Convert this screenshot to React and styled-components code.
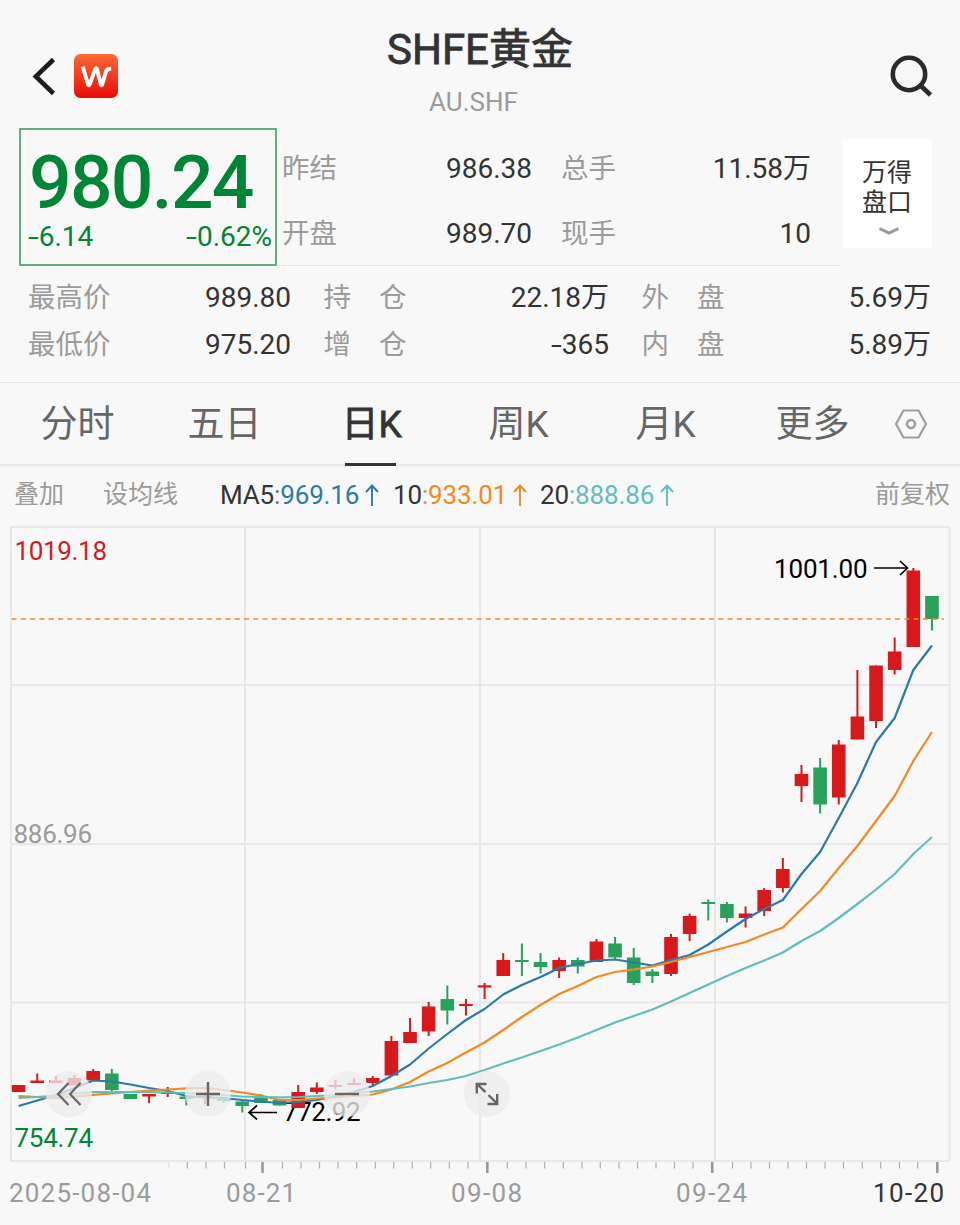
import React from 'react';
import styled, { createGlobalStyle } from 'styled-components';

const colors = {
  bg: '#f8f8f8',
  text: '#333333',
  label: '#9b9b9b',
  tab: '#666666',
  line: '#e8e8e8',
  up: '#d7191c',
  down: '#28a15b',
  green: '#008534',
  ma5: '#2b7aa8',
  ma10: '#f18a21',
  ma20: '#62bdbc',
}

const GlobalStyle = createGlobalStyle`
  * {
    box-sizing: border-box;
  }
  body {
    margin: 0;
    background: ${colors.bg};
    color: ${colors.text};
    font-family: Roboto, 'Noto Sans CJK SC', sans-serif;
  }
  button {
    font-family: inherit;
    border: 0;
    padding: 0;
    background: none;
    color: inherit;
  }
`

const Page = styled.div`
  width: 960px;
  height: 1225px;
  overflow: hidden;
  background: ${colors.bg};
`

const Header = styled.header`
  height: 128px;
  display: grid;
  grid-template-columns: 240px 1fr 240px;
`
const HeaderLeft = styled.div`
  display: flex;
  align-items: flex-start;
  padding: 54px 0 0 31px;
  gap: 18px;
`
const HeaderRight = styled.div`
  display: flex;
  justify-content: flex-end;
  align-items: flex-start;
  padding: 54px 26px 0 0;
`
const Titles = styled.div`
  display: flex;
  flex-direction: column;
  align-items: center;
  padding-top: 20px;
`
const Title = styled.h1`
  margin: 0;
  height: 60px;
  line-height: 60px;
  font-size: 42px;
  font-weight: 400;
  -webkit-text-stroke: 0.8px ${colors.text};
  white-space: nowrap;
`
const Subtitle = styled.div`
  height: 44px;
  line-height: 44px;
  padding-right: 13px;
  font-size: 26px;
  color: ${colors.label};
`

const Quote = styled.section`
  display: flex;
  height: 138px;
  padding-left: 19px;
`
const PriceBox = styled.div`
  width: 258px;
  height: 138px;
  border: 2px solid #63ae82;
  color: ${colors.green};
  padding: 13px 3px 0 7px;
`
const Price = styled.div`
  height: 79px;
  line-height: 79px;
  margin-left: 1px;
  font-size: 75px;
  font-weight: 500;
  letter-spacing: -1.7px;
  white-space: nowrap;
`
const Change = styled.div`
  display: flex;
  justify-content: space-between;
  height: 30px;
  line-height: 30px;
  font-size: 28px;
`
const Dash = styled.span`
  display: inline-block;
  margin-right: 3px;
  transform: scaleX(1.4);
  transform-origin: left;
`
const QuoteGrid = styled.div`
  width: 563px;
  padding: 8px 30px 0 5px;
  display: grid;
  grid-template-columns: 249px 249px;
  column-gap: 30px;
  grid-auto-rows: 65px;
  border-bottom: 1px solid ${colors.line};
`
const Field = styled.div`
  display: flex;
  justify-content: space-between;
  align-items: center;
  font-size: 28px;
  line-height: 30px;
  white-space: nowrap;
`
const Label = styled.span`
  color: ${colors.label};
  font-size: 27.5px;
  letter-spacing: ${props => props.$wide ? '28px' : '0'};
`
const Value = styled.span`
  color: ${colors.text};
  font-size: 28px;
  margin-right: -1px;
`
const BookButton = styled.button`
  width: 90px;
  height: 109px;
  margin: 11px 0 0 2px;
  border-radius: 2px;
  background: white;
  display: flex;
  flex-direction: column;
  align-items: center;
  padding-top: 19px;
  font-size: 25px;
  line-height: 30px;

  svg {
    margin: 8px 0 0 3px;
  }
`

const Stats = styled.section`
  height: 117px;
  padding: 9px 0 0 28px;
  display: grid;
  grid-template-columns: 262px 284.5px 288.5px;
  column-gap: 33.5px;
  grid-auto-rows: 46.5px;
  border-bottom: 1px solid ${colors.line};
`

const Tabs = styled.nav`
  height: 83px;
  display: flex;
  padding-left: 4px;
  border-bottom: 2px solid ${colors.line};
`
const Tab = styled.button`
  position: relative;
  width: 147px;
  height: 83px;
  font-size: 37px;
  line-height: 83px;
  color: ${props => props.$active ? colors.text : colors.tab};
  -webkit-text-stroke: ${props => props.$active ? `0.8px ${colors.text}` : '0'};

  &::after {
    content: '';
    display: ${props => props.$active ? 'block' : 'none'};
    position: absolute;
    left: 47px;
    bottom: 0;
    width: 51px;
    height: 3px;
    background: ${colors.text};
  }
`
const SettingsButton = styled.button`
  display: flex;
  align-items: center;
  margin-left: 8px;
`

const MaBar = styled.div`
  display: flex;
  align-items: center;
  height: 60px;
  padding: 0 10px 2px 14px;
  font-size: 25px;
  line-height: 30px;
  color: ${colors.label};
  white-space: nowrap;
`
const MaLink = styled.span`
  width: ${props => props.$width}px;
`
const MaItem = styled.span`
  width: ${props => props.$width}px;
  display: flex;
  align-items: center;
  font-size: 26px;
  letter-spacing: -0.15px;
  color: ${props => props.$color};

  b {
    font-weight: 400;
    color: ${colors.text};
  }
  svg {
    margin-left: 6px;
  }
`
const MaRight = styled.span`
  margin-left: auto;
`

const ChartArea = styled.div`
  position: relative;
  height: 699px;

  > svg {
    display: block;
  }
`
const RoundButton = styled.button`
  position: absolute;
  left: ${props => props.$left}px;
  top: 545px;
  width: 46px;
  height: 46px;
  border-radius: 50%;
  background: rgba(236, 236, 236, 0.78);
  display: flex;
  align-items: center;
  justify-content: center;
`

// [up, high, top, bottom, low]
const candles = [
  [1, 1085, 1085, 1092, 1092],
  [1, 1073.5, 1080.5, 1083, 1083],
  [1, 1076, 1080.5, 1083, 1083],
  [1, 1075, 1078, 1085.5, 1085.5],
  [1, 1069, 1071, 1080.5, 1080.5],
  [0, 1069, 1073.5, 1090, 1091.5],
  [0, 1094, 1094, 1099, 1099],
  [1, 1094, 1094, 1096.5, 1103],
  [1, 1087, 1092, 1094, 1097],
  [0, 1096, 1096.5, 1099, 1105.5],
  [1, 1092, 1096, 1098, 1104],
  [0, 1097, 1099, 1101, 1103],
  [0, 1101, 1101.5, 1106, 1112.5],
  [0, 1094, 1098, 1103, 1103],
  [0, 1100, 1100, 1105.5, 1105.5],
  [1, 1085, 1092, 1108, 1108],
  [1, 1082.5, 1087.5, 1092, 1094],
  [1, 1080, 1085, 1087, 1089.5],
  [1, 1078, 1083, 1085, 1085],
  [1, 1076, 1078, 1083, 1086],
  [1, 1036, 1041, 1075.5, 1075.5],
  [1, 1018, 1032, 1043, 1043],
  [1, 1002, 1006.5, 1031.5, 1036],
  [0, 985.5, 999, 1010.5, 1024.5],
  [1, 999, 1004, 1006, 1015.5],
  [1, 983, 985.3, 987.5, 999],
  [1, 953, 960, 976, 976],
  [0, 943.5, 960, 962, 976],
  [0, 953, 962, 967, 973.5],
  [1, 957.5, 960, 971, 978],
  [0, 957.5, 960, 966.5, 973.5],
  [1, 939, 941.5, 962, 962],
  [0, 937, 943.5, 957.5, 959.5],
  [0, 948, 957.5, 983, 985],
  [0, 969, 971.5, 976, 983],
  [1, 934, 937, 974, 976],
  [1, 913.5, 916, 934, 941],
  [0, 899.5, 902, 904, 920.5],
  [0, 902, 904, 918, 922.5],
  [1, 906.5, 913.5, 918, 927.5],
  [1, 888, 890, 911, 916],
  [1, 858, 869, 888, 892.5],
  [1, 765, 774, 786, 802],
  [0, 758, 767.5, 804.5, 813.5],
  [1, 740, 744.5, 797.5, 804.5],
  [1, 670, 716.5, 739.5, 739.5],
  [1, 665.5, 665.5, 721, 728],
  [1, 637.5, 651.5, 670, 674.5],
  [1, 568, 570.5, 647, 647],
  [0, 596, 596, 619, 630.5],
]

const ma5 = [
  1106, 1100.5, 1095, 1088, 1080.5, 1081.5, 1084.5, 1088, 1091, 1096, 1097.5, 1098,
  1100, 1101.5, 1103, 1102, 1100, 1096.5, 1092, 1086, 1076, 1064.5, 1048.5, 1034, 1020,
  1009, 994.5, 985, 977, 968, 964, 960.5, 959.5, 962.5, 965.5, 960, 955, 944.5, 931.5,
  919, 909, 900, 874, 852, 818, 783, 742, 718, 670, 645.5,
]
const ma10 = [
  1096, 1097, 1098, 1096.5, 1094.8, 1093.5, 1092, 1090.5, 1089.5, 1088.3, 1088, 1090,
  1092.5, 1095.5, 1100, 1100, 1098.5, 1097.5, 1096, 1094.5, 1089.5, 1082, 1071.5, 1063,
  1052.5, 1042.5, 1030, 1017, 1005, 994, 986, 977, 972, 969.5, 966.5, 962, 957, 952,
  947, 942, 934.5, 927.5, 909, 891, 868, 846, 821, 796, 761, 732,
]
const ma20 = [
  1098, 1097, 1095.5, 1093.5, 1092, 1092, 1092, 1092.2, 1092.5, 1093, 1094, 1095, 1096.5,
  1097, 1097.3, 1097, 1096, 1095, 1093, 1091.5, 1089, 1086.5, 1083, 1080, 1076, 1070,
  1063.5, 1057.5, 1051, 1044.5, 1037.5, 1030, 1022.5, 1016, 1009.5, 1001.5, 993, 984.5,
  976, 968, 960.5, 952.5, 941, 931, 918, 904, 889.5, 874, 854, 837,
]

const averages = [
  { color: colors.ma5, values: ma5 },
  { color: colors.ma10, values: ma10 },
  { color: colors.ma20, values: ma20 },
]

const minorTicks = [
  187.3, 206, 224.5, 245.5, 282.5, 301, 319.5, 338, 356.7, 375.3, 393.7, 412.3, 430.7,
  449.3, 468, 507.3, 526, 544.7, 563.3, 582, 600.3, 619, 637.5, 656, 674.5, 693, 732.5,
  751, 769.5, 788, 806.5, 825, 843.5, 862.3, 880.7, 899.5, 917.7,
]
const majorTicks = [262.5, 487.3, 712.2, 937.3]

const xAt = i => 18.6 + i * 18.64

const Candle = ({ index, data }) => {
  const [up, high, top, bottom, low] = data
  const x = xAt(index)
  return (
    <g fill={up ? colors.up : colors.down}>
      <rect x={x - 1} y={high} width="2" height={low - high} />
      <rect x={x - 6.8} y={top} width="13.6" height={bottom - top} />
    </g>
  )
}

const Chart = () => (
  <svg width="960" height="699" viewBox="0 526 960 699" fontSize="26">
    <g stroke={colors.line} strokeWidth="2">
      <path d="M10 527H950M10 685H950M10 844H950M10 1002.5H950M10 1161H950" />
      <path d="M11 526V1161M245 526V1161M480 526V1161M715 526V1161M949.5 526V1161" />
    </g>
    <g stroke="#b0b0b0" strokeWidth="1.2">
      <path d="M168.8 1162V1168" stroke="#e0e0e0" />
      {minorTicks.map(x => <path key={x} d={`M${x} 1162V1168.5`} />)}
    </g>
    <g stroke="#999999" strokeWidth="2.6">
      {majorTicks.map(x => <path key={x} d={`M${x} 1162V1173`} />)}
    </g>

    <text x="14.5" y="560" fill="#cf1d24" textLength="92.5">1019.18</text>
    <text x="13.5" y="843" fill={colors.label} textLength="78.5">886.96</text>
    <text x="14.5" y="1147" fill={colors.green} textLength="78.5">754.74</text>
    <text x="774" y="577.5" fill="#000" textLength="93.5">1001.00</text>
    <text x="283" y="1120.5" fill="#000" textLength="77.5">772.92</text>
    <g stroke="#000" strokeWidth="1.7" fill="none">
      <path d="M874 568H907M900 561L907.5 568L900 575" />
      <path d="M277 1112.5H249M257 1105.5L249 1112.5L257 1119.5" />
    </g>

    {candles.map((data, i) => <Candle key={i} index={i} data={data} />)}
    {averages.map(({ color, values }) => (
      <polyline
        key={color}
        fill="none"
        stroke={color}
        strokeWidth="2.2"
        strokeLinejoin="round"
        points={values.map((y, i) => `${xAt(i)},${y}`).join(' ')}
      />
    ))}
    <path d="M11.5 619H944" stroke={colors.ma10} strokeWidth="1.6" strokeDasharray="5 4.3" />

    <g fill={colors.label}>
      <text x="9" y="1202" textLength="142">2025-08-04</text>
      <text x="226" y="1202" textLength="70">08-21</text>
      <text x="451" y="1202" textLength="71">09-08</text>
      <text x="676" y="1202" textLength="71">09-24</text>
      <text x="873" y="1202" textLength="71" fill={colors.text}>10-20</text>
    </g>
  </svg>
)

const BackIcon = () => (
  <svg width="25" height="44" viewBox="0 0 25 44" fill="none" stroke="#1d1d1f" strokeWidth="4.6">
    <path d="M22.5 5.5L4.8 22.5L22.5 39.5" />
  </svg>
)

const Logo = () => (
  <svg width="44" height="44" viewBox="0 0 44 44">
    <defs>
      <linearGradient id="logo" x1="0" y1="0" x2="0" y2="1">
        <stop offset="0" stopColor="#ff6a35" />
        <stop offset="1" stopColor="#e80c08" />
      </linearGradient>
    </defs>
    <rect width="44" height="44" rx="6.5" fill="url(#logo)" />
    <path
      d="M8.8 12.8L14.3 31.2H15.4L21.6 14.2H22.8L27 31.2H28L32 17.5Q33 14.6 37.2 14.6"
      fill="none"
      stroke="#fff"
      strokeWidth="3.9"
      strokeLinejoin="bevel"
    />
  </svg>
)

const SearchIcon = () => (
  <svg width="45" height="45" viewBox="0 0 45 45" fill="none" stroke="#2b2b2b" strokeWidth="4.6">
    <circle cx="20" cy="20" r="16.2" />
    <path d="M31 31L41.5 41" />
  </svg>
)

const HexIcon = () => (
  <svg width="34" height="32" viewBox="0 0 34 32" fill="none" stroke="#9f9f9f" strokeWidth="2.2">
    <path d="M9.5 2.5H24.5L32 16L24.5 29.5H9.5L2 16Z" strokeLinejoin="round" />
    <circle cx="17" cy="16" r="4" strokeWidth="2.6" />
  </svg>
)

const UpArrow = () => (
  <svg width="14" height="24" viewBox="0 0 14 24" fill="none" stroke="currentColor" strokeWidth="1.9">
    <path d="M7 23V2.5M1 9L7 2.5L13 9" />
  </svg>
)

const Signed = ({ value }) => (
  value.startsWith('-') ? <><Dash>-</Dash>{value.slice(1)}</> : value
)

const quoteFields = [
  ['昨结', '986.38'],
  ['总手', '11.58万'],
  ['开盘', '989.70'],
  ['现手', '10'],
]

const statFields = [
  ['最高价', '989.80'],
  ['持仓', '22.18万'],
  ['外盘', '5.69万'],
  ['最低价', '975.20'],
  ['增仓', '-365'],
  ['内盘', '5.89万'],
]

const tabs = ['分时', '五日', '日K', '周K', '月K', '更多']

const App = () => {
  return (
    <Page>
      <GlobalStyle />
      <Header>
        <HeaderLeft>
          <BackIcon />
          <Logo />
        </HeaderLeft>
        <Titles>
          <Title>SHFE黄金</Title>
          <Subtitle>AU.SHF</Subtitle>
        </Titles>
        <HeaderRight>
          <SearchIcon />
        </HeaderRight>
      </Header>

      <Quote>
        <PriceBox>
          <Price>980.24</Price>
          <Change>
            <span><Signed value="-6.14" /></span>
            <span><Signed value="-0.62%" /></span>
          </Change>
        </PriceBox>
        <QuoteGrid>
          {quoteFields.map(([label, value]) => (
            <Field key={label}>
              <Label>{label}</Label>
              <Value>{value}</Value>
            </Field>
          ))}
        </QuoteGrid>
        <BookButton>
          <span>万得</span>
          <span>盘口</span>
          <svg width="22" height="12" viewBox="0 0 22 12" fill="none" stroke="#999" strokeWidth="3">
            <path d="M1.5 2.5L11 7L20.5 2.5" />
          </svg>
        </BookButton>
      </Quote>

      <Stats>
        {statFields.map(([label, value]) => (
          <Field key={label}>
            <Label $wide={label.length === 2}>{label}</Label>
            <Value><Signed value={value} /></Value>
          </Field>
        ))}
      </Stats>

      <Tabs>
        {tabs.map(name => (
          <Tab key={name} $active={name === '日K'}>{name}</Tab>
        ))}
        <SettingsButton><HexIcon /></SettingsButton>
      </Tabs>

      <MaBar>
        <MaLink $width={89}>叠加</MaLink>
        <MaLink $width={117}>设均线</MaLink>
        <MaItem $width={173} $color={colors.ma5}><b>MA5</b>:969.16<UpArrow /></MaItem>
        <MaItem $width={147} $color={colors.ma10}><b>10</b>:933.01<UpArrow /></MaItem>
        <MaItem $width={147} $color={colors.ma20}><b>20</b>:888.86<UpArrow /></MaItem>
        <MaRight>前复权</MaRight>
      </MaBar>

      <ChartArea>
        <Chart />
        <RoundButton $left={46}>
          <svg width="26" height="24" viewBox="0 0 26 24" fill="none" stroke="#666" strokeWidth="2.2">
            <path d="M12.5 1L2 12L12.5 23M24.5 1L14 12L24.5 23" />
          </svg>
        </RoundButton>
        <RoundButton $left={185}>
          <svg width="24" height="24" viewBox="0 0 24 24" stroke="#666" strokeWidth="2.4">
            <path d="M0 12H24M12 0V24" />
          </svg>
        </RoundButton>
        <RoundButton $left={324}>
          <svg width="24" height="24" viewBox="0 0 24 24" stroke="#666" strokeWidth="2.4">
            <path d="M0 12H24" />
          </svg>
        </RoundButton>
        <RoundButton $left={464}>
          <svg width="24" height="24" viewBox="0 0 24 24" fill="none" stroke="#666" strokeWidth="2.4">
            <path d="M1.8 11.5V2H11.5M2 2L10.5 10.2M13.5 13L22 21.5M22.2 12V22H12.5" />
          </svg>
        </RoundButton>
      </ChartArea>
    </Page>
  )
}

export default App;
